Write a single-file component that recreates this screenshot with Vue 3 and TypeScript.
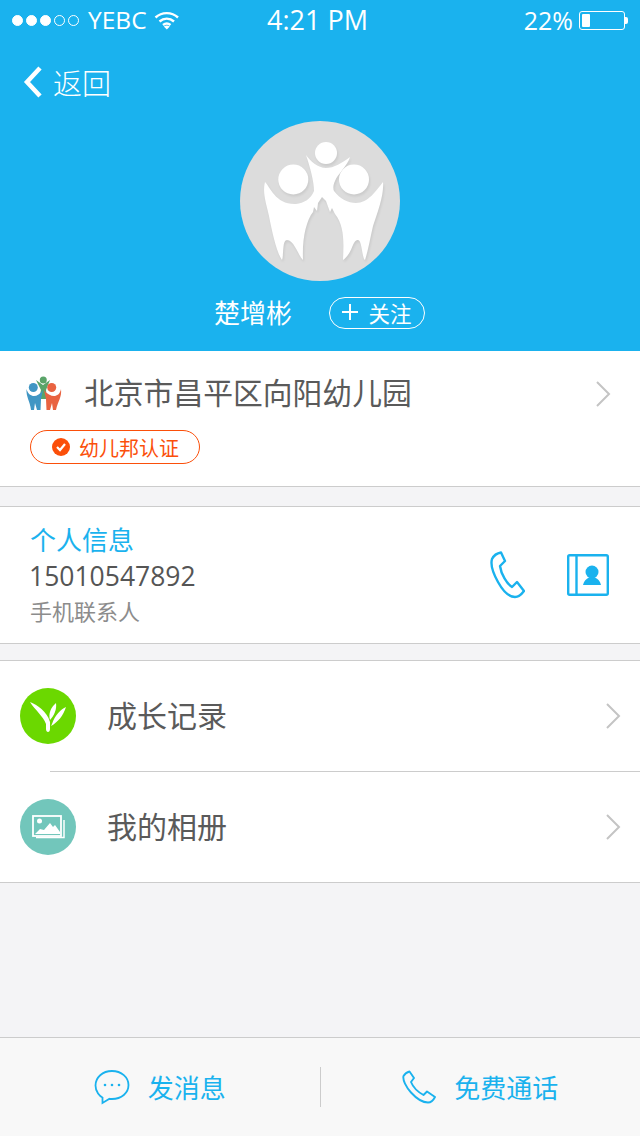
<script setup lang="ts">
const signal: boolean[] = [true, true, true, false, false]
</script>

<template>
  <div class="page">
    <header class="hero">
      <div class="status">
        <div class="status-left">
          <span v-for="(on, i) in signal" :key="i" class="dot" :class="{ on }"></span>
          <span class="carrier">YEBC</span>
          <svg class="wifi" width="26" height="20" viewBox="0 0 26 20" fill="none" stroke="#fff" stroke-width="2.4">
            <path d="M1.5 7.5C7.8 1.6 17.7 1.6 24 7.5" />
            <path d="M5.5 11.5C9.8 7.7 15.8 7.7 20 11.5" />
            <path d="M9 15C11.400 13 14.200 13 16.500 15" />
            <path d="M12.800 19.500L9.800 16.500Q12.800 14.600 15.800 16.500Z" fill="#fff" stroke="none" />
          </svg>
        </div>
        <div class="time">4:21 PM</div>
        <div class="status-right">
          <span class="pct">22%</span>
          <span class="battery"><span class="charge"></span></span>
          <span class="nub"></span>
        </div>
      </div>

      <div class="back">
        <svg width="22" height="34" viewBox="0 0 22 34" fill="none" stroke="#fff" stroke-width="4.500">
          <path d="M18 3L5 17l13 14" />
        </svg>
        <span>返回</span>
      </div>

      <div class="avatar">
        <svg width="160" height="160" viewBox="0 0 160 160">
          <g fill="#fff">
            <circle cx="86" cy="32" r="11" />
            <circle cx="53.300" cy="58.500" r="15" />
            <circle cx="114" cy="58.500" r="15" />
            <path d="M25 61C30 66 36 84 56 83C64 82 71 78 74 70C74 60 70 46 66 34C70 40 78 47 86 47C94 47 102 42 110 36C108 44 97 54 95 60C93 64 93 68 94 70C100 78 108 82 116 82C128 82 136 70 143 61C144 74 138 90 133 105C130 118 128 130 125 139C122 137 122 119 118 119C112 119 113 132 103 139C104 120 104 104 95 93L92 87L90 91L86 80L82 76L78 82L77 90L74 86L73 91C66 100 62 118 63 139C58 134 54 119 47 119C42 119 44 134 42 139C36 130 32 110 29 95C27 85 22 72 25 61Z" />
          </g>
        </svg>
      </div>

      <div class="identity">
        <span class="name">楚增彬</span>
        <button class="follow">
          <svg width="16" height="16" viewBox="0 0 16 16" stroke="#fff" stroke-width="2">
            <path d="M8 0v16M0 8h16" />
          </svg>
          <span>关注</span>
        </button>
      </div>
    </header>

    <section class="school card">
      <div class="school-row">
        <svg class="school-logo" width="38" height="38" viewBox="0 0 38 38">
          <circle cx="18.300" cy="5" r="3.500" fill="#5aa469" />
          <path d="M11 5L18 10L25 5L21 15L22 24L14 24L16 15Z" fill="#5aa469" />
          <path d="M1.500 14C3 19 6 21 9 21C12 21 15 19 18 15L16 24L15.500 35L12 35L10 28L9 35L6 35C5 26 1 22 1.500 14Z" fill="#4096c4" />
          <circle cx="8.300" cy="12.500" r="4.500" fill="#4096c4" />
          <path d="M36 14C35 19 32 21 29 21C26 21 22 19 19 15L21 24L21.500 35L25 35L27 28L28 35L31 35C33 26 37 22 36 14Z" fill="#e96341" />
          <circle cx="26.700" cy="12.500" r="4.500" fill="#e96341" />
        </svg>
        <span class="school-name">北京市昌平区向阳幼儿园</span>
        <svg class="chev" width="16" height="28" viewBox="0 0 16 28" fill="none" stroke="#c4c4c4" stroke-width="2">
          <path d="M2 2l12 12L2 26" />
        </svg>
      </div>
      <div class="badge">
        <svg width="18" height="18" viewBox="0 0 18 18">
          <circle cx="9" cy="9" r="9" fill="#fb4f0a" />
          <path d="M5 9l3 3 5-6" fill="none" stroke="#fff" stroke-width="2.200" />
        </svg>
        <span>幼儿邦认证</span>
      </div>
    </section>

    <section class="info card">
      <div class="info-text">
        <div class="info-title">个人信息</div>
        <div class="phone">15010547892</div>
        <div class="info-sub">手机联系人</div>
      </div>
      <div class="info-actions">
        <svg width="36" height="48" viewBox="0 0 36 48" fill="none" stroke="#1ab2ee" stroke-width="2.400" stroke-linejoin="round">
          <path d="M3 8C5 4 9 2 12 1.500L16 10L11 15C12 23 18 33 23 36L28 31L35 40C32 44 28 46 26 46C20 46 14 40 9 31C4 22 1.500 13 3 8Z" />
        </svg>
        <svg width="42" height="42" viewBox="0 0 42 42">
          <rect x="1.200" y="1.200" width="39.600" height="39.600" rx="1.500" fill="none" stroke="#1ab2ee" stroke-width="2.400" />
          <path d="M9.500 1v40" stroke="#1ab2ee" stroke-width="2.400" />
          <circle cx="25" cy="18" r="6.500" fill="#1ab2ee" />
          <path d="M16 31C17 27 19 25 22 23.500H28C31 25 33 27 34 31Z" fill="#1ab2ee" />
        </svg>
      </div>
    </section>

    <section class="list card">
      <div class="list-row">
        <span class="round green">
          <svg width="56" height="56" viewBox="0 0 56 56" fill="#fff">
            <path d="M10 14C17 17 27 23 30 34L30 41C30 45 26 45 26 41L26 36C23 28 15 22 10 14Z" />
            <path d="M36 15C31 19 28 26 30 32C34 28 37 21 36 15Z" />
            <path d="M46 19C41 21 35 27 32 36L31 38C38 34 43 28 46 19Z" />
          </svg>
        </span>
        <span class="row-label">成长记录</span>
        <svg class="chev" width="16" height="28" viewBox="0 0 16 28" fill="none" stroke="#c4c4c4" stroke-width="2">
          <path d="M2 2l12 12L2 26" />
        </svg>
      </div>
      <div class="divider"></div>
      <div class="list-row">
        <span class="round teal">
          <svg width="56" height="56" viewBox="0 0 56 56">
            <rect x="13" y="17" width="28" height="20" fill="none" stroke="#fff" stroke-width="1.800" />
            <path d="M16 38.500h28V21" fill="none" stroke="#fff" stroke-width="1.500" />
            <circle cx="19.500" cy="22" r="2.500" fill="#fff" />
            <path d="M15 35L20 30L24 31L30 24L33 28L35 26L40 33V35Z" fill="#fff" />
          </svg>
        </span>
        <span class="row-label">我的相册</span>
        <svg class="chev" width="16" height="28" viewBox="0 0 16 28" fill="none" stroke="#c4c4c4" stroke-width="2">
          <path d="M2 2l12 12L2 26" />
        </svg>
      </div>
    </section>

    <div class="spacer"></div>

    <footer class="footer">
      <div class="action">
        <svg width="36" height="36" viewBox="0 0 36 36" fill="none" stroke="#1ab2ee" stroke-width="1.800">
          <path d="M18 2C8.500 2 1.500 8.500 1.500 16.500C1.500 23 6 27.500 8.500 28.500L8.500 34L15.500 29.800C16.500 30 17.500 30 18 30C27.500 30 34.500 24 34.500 16C34.500 8.500 27.500 2 18 2Z" />
          <circle cx="11" cy="16" r="1.300" fill="#1ab2ee" stroke="none" />
          <circle cx="18" cy="16" r="1.300" fill="#1ab2ee" stroke="none" />
          <circle cx="25" cy="16" r="1.300" fill="#1ab2ee" stroke="none" />
        </svg>
        <span>发消息</span>
      </div>
      <div class="sep"></div>
      <div class="action">
        <svg width="34" height="34" viewBox="0 0 34 34" fill="none" stroke="#1ab2ee" stroke-width="1.900" stroke-linejoin="round">
          <path d="M1.500 6C3 3.500 5.500 2 7.500 1.500L12 8L9 12C11 17 16 22 21.500 25L25 21.500L33 27C31.500 30 28.500 32.500 26 32.500C20 32.500 14 28 9 22.500C4 17 .5 10 1.500 6Z" />
        </svg>
        <span>免费通话</span>
      </div>
    </footer>
  </div>
</template>

<style>
html, body { margin: 0; padding: 0; }
</style>

<style scoped>
.page {
  width: 640px;
  height: 1136px;
  display: flex;
  flex-direction: column;
  background: #f4f4f6;
  font-family: "Open Sans", "Noto Sans CJK SC", sans-serif;
  color: #555;
  overflow: hidden;
}
.hero {
  height: 351px;
  flex: none;
  background: #1ab2ee;
  color: #fff;
  display: flex;
  flex-direction: column;
  box-sizing: border-box;
}
.status {
  height: 40px;
  display: grid;
  grid-template-columns: 1fr auto 1fr;
  align-items: center;
  padding: 0 12px;
}
.status-left { display: flex; align-items: center; gap: 3px; }
.dot {
  width: 11px; height: 11px;
  border-radius: 50%;
  border: 1px solid #fff;
  box-sizing: border-box;
}
.dot.on { background: #fff; }
.carrier { font-size: 24.500px; margin-left: 6px; line-height: 40px; }
.wifi { margin-left: 4px; }
.time { font-size: 27px; line-height: 40px; margin-right: 5px; }
.status-right { display: flex; align-items: center; justify-content: flex-end; }
.pct { font-size: 25px; line-height: 40px; margin-right: 6px; }
.battery {
  width: 46px; height: 19px;
  border: 1px solid #fff;
  border-radius: 3px;
  box-sizing: border-box;
  padding: 2px;
  display: flex;
}
.charge { width: 8px; background: #fff; border-radius: 1px; }
.nub { width: 3px; height: 7px; background: #fff; border-radius: 0 2px 2px 0; }
.back {
  display: flex;
  align-items: center;
  gap: 9px;
  padding-left: 22px;
  margin-top: 25px;
  height: 34px;
  font-size: 29px;
  font-weight: 300;
}
.avatar {
  width: 160px; height: 160px;
  border-radius: 50%;
  background: #dcdcdc;
  margin: 22px auto 0;
  overflow: hidden;
}
.avatar svg { display: block; filter: drop-shadow(1px 2px 1px rgba(0,0,0,.08)); }
.identity {
  display: flex;
  align-items: center;
  margin: 16px 0 0 214px;
  height: 32px;
}
.name { font-size: 26px; line-height: 32px; }
.follow {
  margin-left: 37px;
  width: 96px; height: 32px;
  border: 1.500px solid #fff;
  border-radius: 16px;
  background: none;
  color: #fff;
  font: inherit;
  font-size: 21.500px;
  display: flex;
  align-items: center;
  padding: 0 0 2px 11.500px;
  gap: 11px;
  box-sizing: border-box;
}
.card { background: #fff; flex: none; box-sizing: border-box; }
.school {
  height: 136px;
  border-bottom: 1px solid #ccc;
  padding-top: 24px;
}
.school-row {
  display: flex;
  align-items: center;
  height: 38px;
  padding-left: 25px;
}
.school-name { font-size: 29.800px; margin-left: 21px; line-height: 38px; flex: 1; color: #5a5a5a; padding-bottom: 2px; }
.chev { flex: none; margin-right: 29px; }
.badge {
  margin: 17px 0 0 30px;
  width: 170px; height: 34px;
  border: 1.500px solid #fb4f0a;
  border-radius: 17px;
  box-sizing: border-box;
  display: flex;
  align-items: center;
  padding-left: 21px;
  gap: 9px;
  color: #fb4f0a;
  font-size: 20px;
}
.info {
  margin-top: 19px;
  height: 138px;
  border-top: 1px solid #ccc;
  border-bottom: 1px solid #ccc;
  display: flex;
  align-items: center;
  padding: 0 31px 0 30px;
}
.info-text { flex: 1; display: flex; flex-direction: column; padding-bottom: 2px; }
.info-title { color: #1ab2ee; font-size: 26px; line-height: 36px; }
.phone { font-size: 26.500px; line-height: 37px; color: #555; margin-left: -1px; }
.info-sub { font-size: 22px; line-height: 32px; color: #8c8c8c; }
.info-actions { display: flex; align-items: center; gap: 42px; }
.list {
  margin-top: 16px;
  border-top: 1px solid #ccc;
  border-bottom: 1px solid #ccc;
  height: 223px;
}
.list-row {
  height: 110px;
  display: flex;
  align-items: center;
  padding-left: 20px;
}
.divider { height: 1px; background: #ccc; margin-left: 50px; }
.round {
  width: 56px; height: 56px;
  border-radius: 50%;
  flex: none;
  display: block;
}
.round svg { display: block; }
.green { background: #6bd800; }
.teal { background: #72c6bb; }
.row-label { font-size: 30px; margin-left: 31px; flex: 1; color: #5a5a5a; line-height: 38px; }
.list-row .chev { margin-right: 19px; }
.spacer { flex: 1; }
.footer {
  height: 99px;
  flex: none;
  background: #f8f8f8;
  border-top: 1px solid #ccc;
  box-sizing: border-box;
  display: flex;
  align-items: center;
}
.action {
  flex: 1;
  display: flex;
  align-items: center;
  justify-content: center;
  gap: 18px;
  color: #1ab2ee;
  font-size: 26px;
}
.sep { width: 1px; height: 40px; background: #ccc; flex: none; }
</style>
